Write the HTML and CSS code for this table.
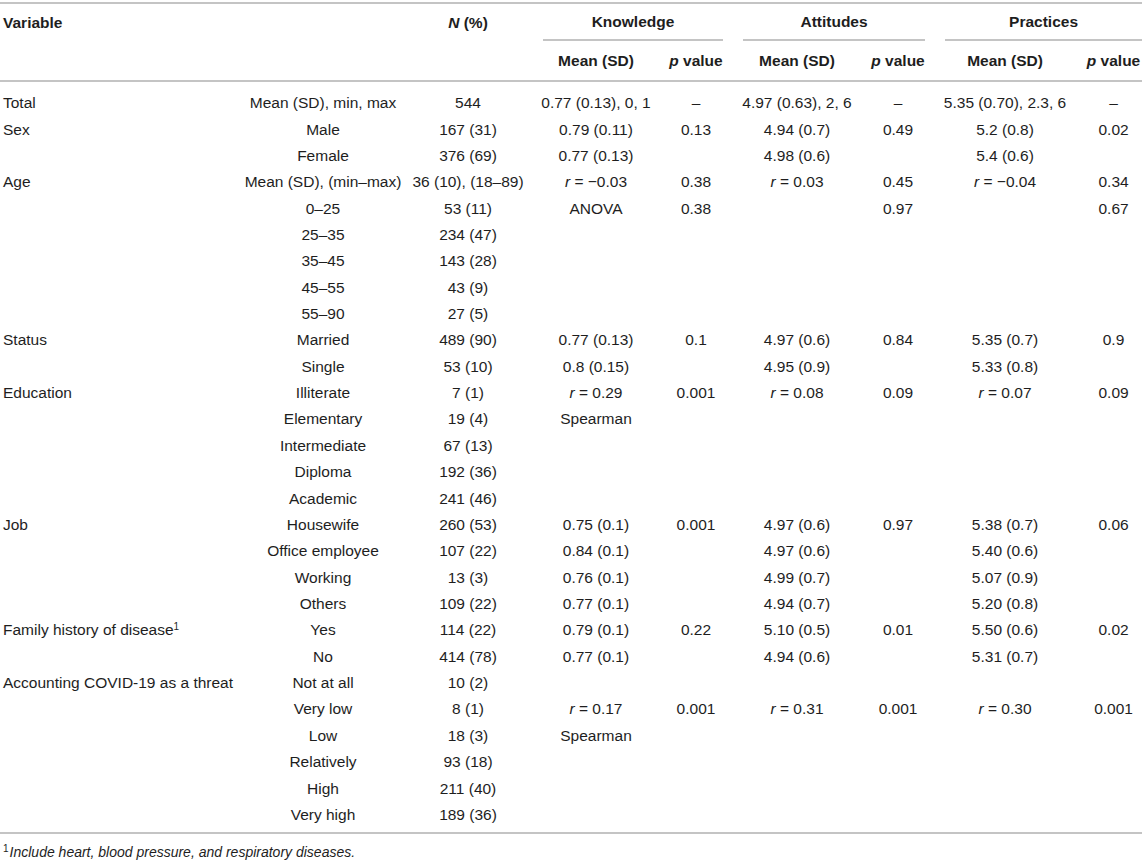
FILE: index.html
```html
<!DOCTYPE html>
<html lang="en">
<head>
<meta charset="utf-8">
<title>Table</title>
<link rel="stylesheet" href="styles.css">
</head>
<body>
<div class="page">
<table class="kap">
  <colgroup>
    <col class="c1"><col class="c2"><col class="c3"><col class="c4"><col class="c5"><col class="c6"><col class="c7"><col class="c8"><col class="c9">
  </colgroup>
  <thead>
    <tr class="h1">
      <th class="var" rowspan="2" colspan="2">Variable</th>
      <th class="n" rowspan="2"><i>N</i> (%)</th>
      <th class="grp" colspan="2"><div class="grp-label">Knowledge</div></th>
      <th class="grp" colspan="2"><div class="grp-label">Attitudes</div></th>
      <th class="grp last" colspan="2"><div class="grp-label">Practices</div></th>
    </tr>
    <tr class="h2">
      <th>Mean (SD)</th><th><i>p</i> value</th>
      <th>Mean (SD)</th><th><i>p</i> value</th>
      <th>Mean (SD)</th><th class="pl"><i>p</i> value</th>
    </tr>
  </thead>
  <tbody>
    <tr class="first"><td class="v">Total</td><td>Mean (SD), min, max</td><td>544</td><td>0.77 (0.13), 0, 1</td><td>–</td><td>4.97 (0.63), 2, 6</td><td>–</td><td>5.35 (0.70), 2.3, 6</td><td class="pl">–</td></tr>
    <tr><td class="v">Sex</td><td>Male</td><td>167 (31)</td><td>0.79 (0.11)</td><td>0.13</td><td>4.94 (0.7)</td><td>0.49</td><td>5.2 (0.8)</td><td class="pl">0.02</td></tr>
    <tr><td class="v"></td><td>Female</td><td>376 (69)</td><td>0.77 (0.13)</td><td></td><td>4.98 (0.6)</td><td></td><td>5.4 (0.6)</td><td class="pl"></td></tr>
    <tr><td class="v">Age</td><td>Mean (SD), (min–max)</td><td>36 (10), (18–89)</td><td><i>r</i> = −0.03</td><td>0.38</td><td><i>r</i> = 0.03</td><td>0.45</td><td><i>r</i> = −0.04</td><td class="pl">0.34</td></tr>
    <tr><td class="v"></td><td>0–25</td><td>53 (11)</td><td>ANOVA</td><td>0.38</td><td></td><td>0.97</td><td></td><td class="pl">0.67</td></tr>
    <tr><td class="v"></td><td>25–35</td><td>234 (47)</td><td></td><td></td><td></td><td></td><td></td><td class="pl"></td></tr>
    <tr><td class="v"></td><td>35–45</td><td>143 (28)</td><td></td><td></td><td></td><td></td><td></td><td class="pl"></td></tr>
    <tr><td class="v"></td><td>45–55</td><td>43 (9)</td><td></td><td></td><td></td><td></td><td></td><td class="pl"></td></tr>
    <tr><td class="v"></td><td>55–90</td><td>27 (5)</td><td></td><td></td><td></td><td></td><td></td><td class="pl"></td></tr>
    <tr><td class="v">Status</td><td>Married</td><td>489 (90)</td><td>0.77 (0.13)</td><td>0.1</td><td>4.97 (0.6)</td><td>0.84</td><td>5.35 (0.7)</td><td class="pl">0.9</td></tr>
    <tr><td class="v"></td><td>Single</td><td>53 (10)</td><td>0.8 (0.15)</td><td></td><td>4.95 (0.9)</td><td></td><td>5.33 (0.8)</td><td class="pl"></td></tr>
    <tr><td class="v">Education</td><td>Illiterate</td><td>7 (1)</td><td><i>r</i> = 0.29</td><td>0.001</td><td><i>r</i> = 0.08</td><td>0.09</td><td><i>r</i> = 0.07</td><td class="pl">0.09</td></tr>
    <tr><td class="v"></td><td>Elementary</td><td>19 (4)</td><td>Spearman</td><td></td><td></td><td></td><td></td><td class="pl"></td></tr>
    <tr><td class="v"></td><td>Intermediate</td><td>67 (13)</td><td></td><td></td><td></td><td></td><td></td><td class="pl"></td></tr>
    <tr><td class="v"></td><td>Diploma</td><td>192 (36)</td><td></td><td></td><td></td><td></td><td></td><td class="pl"></td></tr>
    <tr><td class="v"></td><td>Academic</td><td>241 (46)</td><td></td><td></td><td></td><td></td><td></td><td class="pl"></td></tr>
    <tr><td class="v">Job</td><td>Housewife</td><td>260 (53)</td><td>0.75 (0.1)</td><td>0.001</td><td>4.97 (0.6)</td><td>0.97</td><td>5.38 (0.7)</td><td class="pl">0.06</td></tr>
    <tr><td class="v"></td><td>Office employee</td><td>107 (22)</td><td>0.84 (0.1)</td><td></td><td>4.97 (0.6)</td><td></td><td>5.40 (0.6)</td><td class="pl"></td></tr>
    <tr><td class="v"></td><td>Working</td><td>13 (3)</td><td>0.76 (0.1)</td><td></td><td>4.99 (0.7)</td><td></td><td>5.07 (0.9)</td><td class="pl"></td></tr>
    <tr><td class="v"></td><td>Others</td><td>109 (22)</td><td>0.77 (0.1)</td><td></td><td>4.94 (0.7)</td><td></td><td>5.20 (0.8)</td><td class="pl"></td></tr>
    <tr><td class="v">Family history of disease<sup>1</sup></td><td>Yes</td><td>114 (22)</td><td>0.79 (0.1)</td><td>0.22</td><td>5.10 (0.5)</td><td>0.01</td><td>5.50 (0.6)</td><td class="pl">0.02</td></tr>
    <tr><td class="v"></td><td>No</td><td>414 (78)</td><td>0.77 (0.1)</td><td></td><td>4.94 (0.6)</td><td></td><td>5.31 (0.7)</td><td class="pl"></td></tr>
    <tr><td class="v">Accounting COVID-19 as a threat</td><td>Not at all</td><td>10 (2)</td><td></td><td></td><td></td><td></td><td></td><td class="pl"></td></tr>
    <tr><td class="v"></td><td>Very low</td><td>8 (1)</td><td><i>r</i> = 0.17</td><td>0.001</td><td><i>r</i> = 0.31</td><td>0.001</td><td><i>r</i> = 0.30</td><td class="pl">0.001</td></tr>
    <tr><td class="v"></td><td>Low</td><td>18 (3)</td><td>Spearman</td><td></td><td></td><td></td><td></td><td class="pl"></td></tr>
    <tr><td class="v"></td><td>Relatively</td><td>93 (18)</td><td></td><td></td><td></td><td></td><td></td><td class="pl"></td></tr>
    <tr><td class="v"></td><td>High</td><td>211 (40)</td><td></td><td></td><td></td><td></td><td></td><td class="pl"></td></tr>
    <tr class="last-row"><td class="v"></td><td>Very high</td><td>189 (36)</td><td></td><td></td><td></td><td></td><td></td><td class="pl"></td></tr>
  </tbody>
</table>
<p class="note"><sup>1</sup><i>Include heart, blood pressure, and respiratory diseases.</i></p>
</div>
</body>
</html>
```

FILE: styles.css
```css
html, body {
  margin: 0;
  padding: 0;
  background: #ffffff;
}

body {
  font-family: "Liberation Sans", Arial, Helvetica, sans-serif;
  color: #1e1e1e;
  font-size: 15.5px;
}

.page {
  padding-top: 2px;
  width: 1142px;
}

.kap {
  width: 1142px;
  table-layout: fixed;
  border-collapse: collapse;
  border-top: 2px solid #c4c4c4;
  border-bottom: 2px solid #c4c4c4;
}

.c1 { width: 243px; }
.c2 { width: 160px; }
.c3 { width: 130px; }
.c4 { width: 126px; }
.c5 { width: 74px; }
.c6 { width: 128px; }
.c7 { width: 74px; }
.c8 { width: 140px; }
.c9 { width: 67px; }

.kap th {
  font-weight: bold;
  text-align: center;
  padding: 0;
  white-space: nowrap;
}

.kap th.var {
  text-align: left;
  vertical-align: top;
  padding: 9px 0 0 3px;
  line-height: 20px;
}

.kap th.n {
  vertical-align: top;
  padding-top: 9px;
  line-height: 20px;
}

.kap th.grp {
  padding: 0 10px;
  vertical-align: top;
}

.kap th.grp.last {
  padding-right: 0;
}

.grp-label {
  height: 35px;
  line-height: 35px;
  border-bottom: 2px solid #c4c4c4;
}

.h2 th {
  height: 39px;
  line-height: 20px;
  vertical-align: middle;
}

.h2 {
  border-bottom: 2px solid #c4c4c4;
}

.kap td {
  height: 26.37px;
  padding: 0;
  text-align: center;
  vertical-align: middle;
  white-space: nowrap;
  line-height: 20px;
}

.kap td.v {
  text-align: left;
  padding-left: 3px;
}

.kap .pl {
  padding-left: 10px;
}

.kap tr.first td {
  height: 26.37px;
  padding-top: 8px;
}

.kap tr.last-row td {
  padding-bottom: 4px;
}

sup {
  font-size: 10px;
  line-height: 0;
  vertical-align: 0.55em;
  font-style: normal;
}

.note {
  margin: 9px 0 0 3px;
  font-size: 14px;
  line-height: 18px;
}

.note sup {
  font-size: 10px;
  margin-right: 1px;
}
```
